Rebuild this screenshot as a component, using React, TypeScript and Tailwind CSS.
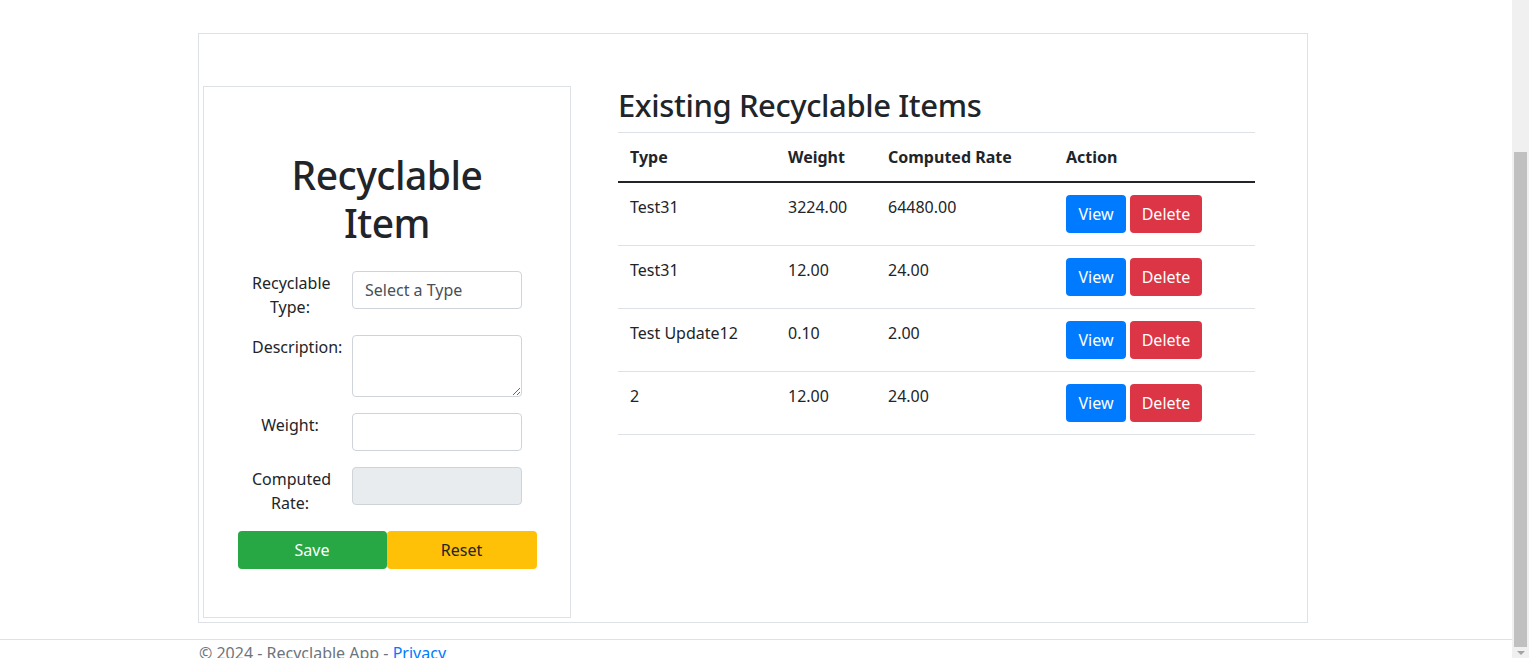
import React from "react";

type Item = {
  type: string;
  weight: string;
  rate: string;
};

const items: Item[] = [
  { type: "Test31", weight: "3224.00", rate: "64480.00" },
  { type: "Test31", weight: "12.00", rate: "24.00" },
  { type: "Test Update12", weight: "0.10", rate: "2.00" },
  { type: "2", weight: "12.00", rate: "24.00" },
];

const font = { fontFamily: '"Noto Sans", "Open Sans", sans-serif' };

const FormRow = ({ label, children }: { label: string; children: React.ReactNode }) => (
  <div className="flex items-start mb-4">
    <label className="w-[76px] text-center leading-6 text-[16px] text-[#212529]">{label}</label>
    <div className="ml-[24px] w-[170px]">{children}</div>
  </div>
);

const inputBase =
  "block w-full h-[38px] px-3 border border-[#ced4da] rounded text-[16px] text-[#495057] outline-none";

const RecyclableForm = () => (
  <div className="w-[368px] h-[532px] border border-[#dee2e6] flex flex-col items-center shrink-0">
    <h1 className="mt-[64px] w-[270px] text-center text-[39px] tracking-[-0.5px] leading-[48px] font-medium text-[#212529]">
      Recyclable
      <br />
      Item
    </h1>
    <div className="mt-[24px] w-[270px]">
      <FormRow label="Recyclable Type:">
        <input readOnly value="Select a Type" className={inputBase + " bg-white"} style={font} />
      </FormRow>
      <FormRow label="Description:">
        <textarea className="block w-full h-[62px] px-3 py-1.5 border border-[#ced4da] rounded text-[16px] bg-white outline-none" />
      </FormRow>
      <FormRow label="Weight:">
        <input className={inputBase + " bg-white"} />
      </FormRow>
      <FormRow label="Computed Rate:">
        <input disabled className={inputBase + " bg-[#e9ecef]"} />
      </FormRow>
    </div>
    <div className="flex">
      <button className="w-[149px] h-[38px] bg-[#28a745] text-white text-[16px] rounded">Save</button>
      <button className="w-[150px] h-[38px] bg-[#ffc107] text-[#212529] text-[16px] rounded">Reset</button>
    </div>
  </div>
);

const ItemsTable = () => (
  <div className="ml-[47px] w-[637px]">
    <h2 className="text-[31px] tracking-[-0.4px] leading-[38px] font-medium text-[#212529] mb-2">
      Existing Recyclable Items
    </h2>
    <table className="w-full border-collapse text-[16px] text-[#212529]">
      <thead>
        <tr className="border-t border-[#dee2e6] border-b-2 border-b-[#212529]">
          <th className="w-[158px] p-3 text-left font-bold leading-6">Type</th>
          <th className="w-[100px] p-3 text-left font-bold leading-6">Weight</th>
          <th className="w-[178px] p-3 text-left font-bold leading-6">Computed Rate</th>
          <th className="p-3 text-left font-bold leading-6">Action</th>
        </tr>
      </thead>
      <tbody>
        {items.map((it, i) => (
          <tr key={i} className="border-b border-[#dee2e6]">
            <td className="p-3 align-top leading-6">{it.type}</td>
            <td className="p-3 align-top leading-6">{it.weight}</td>
            <td className="p-3 align-top leading-6">{it.rate}</td>
            <td className="p-3 align-top leading-6">
              <div className="flex gap-1">
                <button className="h-[38px] w-[60px] bg-[#007bff] text-white rounded">View</button>
                <button className="h-[38px] w-[72px] bg-[#dc3545] text-white rounded">Delete</button>
              </div>
            </td>
          </tr>
        ))}
      </tbody>
    </table>
  </div>
);

export default function App() {
  return (
    <div className="flex h-[658px] overflow-hidden bg-white" style={font}>
      <div className="flex-1 flex flex-col">
        <main className="pt-[33px]">
          <div className="ml-[198px] w-[1110px] h-[590px] border border-[#dee2e6] pt-[52px] pl-1 flex items-start">
            <RecyclableForm />
            <ItemsTable />
          </div>
        </main>
        <footer className="mt-[16px] border-t border-[#dee2e6] pl-[199px] pt-[1px] text-[16px] leading-6 text-[#6c757d]">
          © 2024 - Recyclable App - <a className="text-[#007bff]">Privacy</a>
        </footer>
      </div>
      <div className="w-[17px] bg-[#f0f0f0] flex flex-col items-center">
        <div className="mt-[152px] w-[13px] h-[495px] bg-[#c0c0c0]" />
        <div className="mt-[4px] w-0 h-0 border-l-[4px] border-r-[4px] border-t-[4px] border-l-transparent border-r-transparent border-t-[#a3a3a3]" />
      </div>
    </div>
  );
}
